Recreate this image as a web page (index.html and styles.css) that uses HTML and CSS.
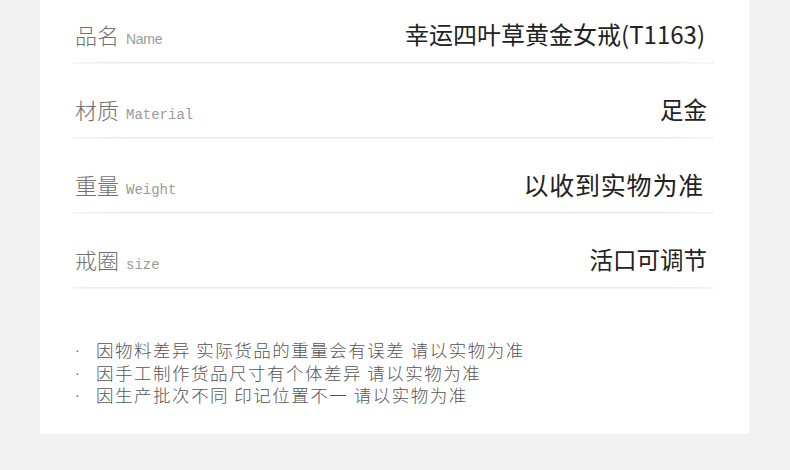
FILE: index.html
```html
<!DOCTYPE html>
<html lang="zh">
<head>
<meta charset="utf-8">
<link rel="stylesheet" href="styles.css">
</head>
<body>
<div class="card">
  <div class="rows">
    <div class="row first">
      <div class="label"><span class="cn">品名</span><span class="en en-sans">Name</span></div>
      <div class="value wide">幸运四叶草黄金女戒(T1163)</div>
    </div>
    <div class="sep"></div>
    <div class="row">
      <div class="label"><span class="cn">材质</span><span class="en">Material</span></div>
      <div class="value">足金</div>
    </div>
    <div class="sep"></div>
    <div class="row">
      <div class="label"><span class="cn">重量</span><span class="en">Weight</span></div>
      <div class="value big">以收到实物为准</div>
    </div>
    <div class="sep"></div>
    <div class="row">
      <div class="label"><span class="cn">戒圈</span><span class="en">size</span></div>
      <div class="value">活口可调节</div>
    </div>
    <div class="sep"></div>
  </div>
  <ul class="notes">
    <li><span class="dot">·</span><span class="txt">因物料差异 实际货品的重量会有误差 请以实物为准</span></li>
    <li><span class="dot">·</span><span class="txt">因手工制作货品尺寸有个体差异 请以实物为准</span></li>
    <li><span class="dot">·</span><span class="txt">因生产批次不同 印记位置不一 请以实物为准</span></li>
  </ul>
</div>
</body>
</html>
```

FILE: styles.css
```css
html, body {
  margin: 0;
  padding: 0;
}
body {
  background: #f2f2f2;
  width: 790px;
  height: 470px;
  overflow: hidden;
  font-family: "Noto Sans CJK SC", "Noto Sans", sans-serif;
}
.card {
  margin-left: 40px;
  width: 709px;
  height: 434px;
  background: #ffffff;
  box-sizing: border-box;
  padding: 0 35px 0 33px;
}
.rows {
  display: flex;
  flex-direction: column;
}
.row {
  height: 50px;
  box-sizing: border-box;
  margin-top: 24px;
  display: flex;
  align-items: center;
  justify-content: space-between;
  padding: 0 7px 6px 2px;
}
.row.first {
  margin-top: 12px;
}
.sep {
  height: 1px;
  background: linear-gradient(to right, #f2f2f2, #e8e8e8 8%, #e8e8e8 92%, #f4f4f4);
  box-shadow: 0 1px 0 #f6f6f6;
}
.label {
  display: flex;
  align-items: baseline;
  gap: 7px;
  color: #707070;
}
.cn {
  font-size: 22px;
  line-height: 30px;
  font-weight: 300;
}
.en {
  font-family: "Liberation Mono", monospace;
  font-size: 14px;
  color: #9a9a9a;
}
.en-sans {
  font-family: "Liberation Sans", Arial, sans-serif;
  font-size: 14px;
  letter-spacing: -0.3px;
}
.value {
  font-size: 23.5px;
  line-height: 32px;
  color: #222;
}
.value.wide {
  font-size: 24px;
  margin-right: 2px;
}
.value.big {
  font-size: 25px;
  letter-spacing: 0.8px;
  margin-right: 3px;
}
.notes {
  list-style: none;
  margin: 51px 0 0 0;
  padding: 0 0 0 2px;
  display: flex;
  flex-direction: column;
}
.notes li {
  display: flex;
  font-size: 17.5px;
  line-height: 22.5px;
  color: #555;
  font-weight: 300;
}
.dot {
  width: 21px;
  font-family: "Liberation Sans", Arial, sans-serif;
  font-size: 14px;
  color: #666;
}
.txt {
  letter-spacing: 1.5px;
}
```
